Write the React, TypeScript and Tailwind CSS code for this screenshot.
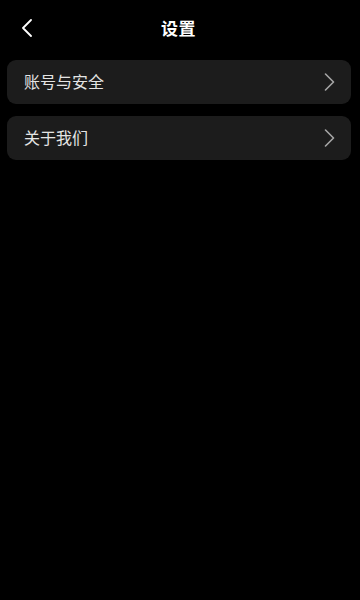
import React from "react";

const items = ["账号与安全", "关于我们"];

function Chevron() {
  return (
    <svg width="11" height="18" viewBox="0 0 11 18" fill="none">
      <polyline points="1.5,1 9.5,9 1.5,17" stroke="#a6a6a6" strokeWidth="1.6" strokeLinecap="round" strokeLinejoin="round" />
    </svg>
  );
}

export default function App() {
  return (
    <div
      className="w-full min-h-[600px] bg-black text-white"
      style={{ fontFamily: '"Noto Sans", "Noto Sans CJK SC", sans-serif' }}
    >
      {/* header */}
      <div className="relative h-14 flex items-center justify-center">
        <button className="absolute left-[21px] top-[19px]">
          <svg width="12" height="18" viewBox="0 0 12 18" fill="none">
            <polyline points="10,1 2,9 10,17" stroke="#ffffff" strokeWidth="1.8" strokeLinecap="round" strokeLinejoin="round" />
          </svg>
        </button>
        <h1 className="text-[17px] font-bold leading-none tracking-[0.5px] -ml-[3px]">设置</h1>
      </div>

      <div className="mt-1 pl-[7px] pr-[9px] flex flex-col gap-3">
        {items.map((label) => (
          <div
            key={label}
            className="h-11 rounded-[9px] bg-[#1c1c1c] flex items-center justify-between pl-[17px] pr-[16px]"
          >
            <span className="text-[16px] text-[#e4e4e4] leading-none">{label}</span>
            <Chevron />
          </div>
        ))}
      </div>
    </div>
  );
}
